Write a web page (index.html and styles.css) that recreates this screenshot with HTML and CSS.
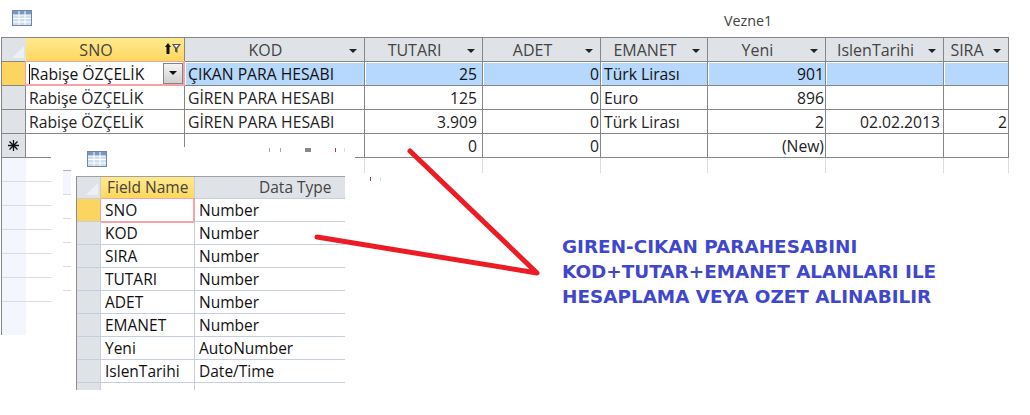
FILE: index.html
```html
<!DOCTYPE html>
<html>
<head>
    <title>Vezne1</title>
    <link rel="stylesheet" href="styles.css">
</head>
<body>
    <!-- Table tab -->
    <div class="tab">
        <svg class="table-icon" viewBox="0 0 20 16"><rect x=".5" y=".5" width="19" height="15" fill="#cfdcee" stroke="#6f86ab"/><rect x="1" y="1" width="18" height="4" fill="#7d97c4"/><path d="M7 1v14M13 1v14M1 5h18M1 8.500h18M1 12h18" stroke="#fff" fill="none"/></svg>
        <span class="tab-title">Vezne1</span>
    </div>

    <!-- Main datasheet -->
    <div class="sheet">
        <div class="corner"><span class="corner-mark"></span></div>
        <div class="head head-active">SNO<svg class="filter-icon" viewBox="0 0 16 11"><path d="M3 0 6 4H4.500v7h-3V4H0z" fill="#111"/><path d="M7 1h9l-3.500 4.500V10L10 8.500v-3z" fill="#555"/><path d="M9 2h4.500l-2.200 2.800z" fill="#fff"/></svg></div>
        <div class="head">KOD<i class="drop"></i></div>
        <div class="head">TUTARI<i class="drop"></i></div>
        <div class="head">ADET<i class="drop"></i></div>
        <div class="head">EMANET<i class="drop"></i></div>
        <div class="head">Yeni<i class="drop"></i></div>
        <div class="head">IslenTarihi<i class="drop"></i></div>
        <div class="head">SIRA<i class="drop"></i></div>

        <div class="sel sel-active"></div>
        <div class="cell cell-edit"><span class="caret"></span>Rabişe ÖZÇELİK<span class="combo"><i class="combo-arrow"></i></span></div>
        <div class="cell hi">ÇIKAN PARA HESABI</div>
        <div class="cell hi num money">25</div>
        <div class="cell hi num">0</div>
        <div class="cell hi">Türk Lirası</div>
        <div class="cell hi num">901</div>
        <div class="cell hi num"></div>
        <div class="cell hi num"></div>

        <div class="sel"></div>
        <div class="cell">Rabişe ÖZÇELİK</div>
        <div class="cell">GİREN PARA HESABI</div>
        <div class="cell num money">125</div>
        <div class="cell num">0</div>
        <div class="cell">Euro</div>
        <div class="cell num">896</div>
        <div class="cell num"></div>
        <div class="cell num"></div>

        <div class="sel"></div>
        <div class="cell">Rabişe ÖZÇELİK</div>
        <div class="cell">GİREN PARA HESABI</div>
        <div class="cell num money">3.909</div>
        <div class="cell num">0</div>
        <div class="cell">Türk Lirası</div>
        <div class="cell num">2</div>
        <div class="cell num date">02.02.2013</div>
        <div class="cell num">2</div>

        <div class="sel sel-new"><svg class="new-icon" viewBox="0 0 11 11"><path d="M5.500 0v11M0 5.500h11M1.500 1.500l8 8M9.500 1.500l-8 8" stroke="#111" stroke-width="1.300" fill="none"/></svg></div>
        <div class="cell"></div>
        <div class="cell"></div>
        <div class="cell num money">0</div>
        <div class="cell num">0</div>
        <div class="cell"></div>
        <div class="cell num">(New)</div>
        <div class="cell num"></div>
        <div class="cell num"></div>

        <div class="tail tail-sel"></div>
        <div class="tail"></div>
        <div class="tail"></div>
        <div class="tail"></div>
        <div class="tail"></div>
        <div class="tail"></div>
        <div class="tail"></div>
        <div class="tail"></div>
        <div class="tail"></div>
    </div>

    <!-- Leftover of the sheet below the pasted picture -->
    <div class="strip">
        <div class="strip-row"></div>
        <div class="strip-row"></div>
        <div class="strip-row"></div>
        <div class="strip-row"></div>
        <div class="strip-row"></div>
        <div class="strip-row"></div>
        <div class="strip-row strip-last"></div>
    </div>

    <!-- Pasted design view -->
    <div class="paste">
        <i class="tick t1"></i><i class="tick t2"></i><i class="tick t3"></i><i class="tick t4"></i><i class="tick t5"></i>
        <div class="ghost">
            <div class="ghost-row"></div>
            <div class="ghost-row ghost-plain"></div>
            <div class="ghost-row ghost-plain"></div>
            <div class="ghost-row ghost-plain"></div>
            <div class="ghost-row ghost-plain"></div>
            <div class="ghost-row ghost-plain"></div>
        </div>
        <svg class="table-icon design-icon" viewBox="0 0 20 16"><rect x=".5" y=".5" width="19" height="15" fill="#cfdcee" stroke="#6f86ab"/><rect x="1" y="1" width="18" height="4" fill="#7d97c4"/><path d="M7 1v14M13 1v14M1 5h18M1 8.500h18M1 12h18" stroke="#fff" fill="none"/></svg>
        <div class="design">
            <div class="corner design-corner"><span class="corner-mark"></span></div>
            <div class="dhead dhead-active">Field Name</div>
            <div class="dhead dhead-type">Data Type</div>

            <div class="dsel sel-active"></div><div class="dcell dname dcell-edit">SNO</div><div class="dcell">Number</div>
            <div class="dsel"></div><div class="dcell dname">KOD</div><div class="dcell">Number</div>
            <div class="dsel"></div><div class="dcell dname">SIRA</div><div class="dcell">Number</div>
            <div class="dsel"></div><div class="dcell dname">TUTARI</div><div class="dcell">Number</div>
            <div class="dsel"></div><div class="dcell dname">ADET</div><div class="dcell">Number</div>
            <div class="dsel"></div><div class="dcell dname">EMANET</div><div class="dcell">Number</div>
            <div class="dsel"></div><div class="dcell dname">Yeni</div><div class="dcell">AutoNumber</div>
            <div class="dsel"></div><div class="dcell dname">IslenTarihi</div><div class="dcell">Date/Time</div>
            <div class="dsel dsel-end"></div><div class="dcell dname dcell-end"></div><div class="dcell dcell-end"></div>
        </div>
    </div>

    <i class="tick t6"></i><i class="tick t7"></i>

    <!-- Arrows drawn on top -->
    <svg class="arrows" viewBox="0 0 1030 415">
        <path d="M410 151 537 273 317 237" fill="none" stroke="#ed1c24" stroke-width="5" stroke-linecap="round" stroke-linejoin="round"/>
    </svg>

    <div class="note">
        GIREN-CIKAN PARAHESABINI<br>
        KOD+TUTAR+EMANET ALANLARI ILE<br>
        HESAPLAMA VEYA OZET ALINABILIR
    </div>
</body>
</html>
```

FILE: styles.css
```css
* {
    margin: 0;
    padding: 0;
    box-sizing: border-box;
}

body {
    width: 1030px;
    height: 415px;
    overflow: hidden;
    position: relative;
    background: #fff;
    font-family: 'Open Sans', sans-serif;
    font-size: 15.700px;
    color: #222;
}

.tab {
    height: 37px;
    padding: 10px 0 0 12px;
    display: flex;
    align-items: flex-start;
}

.table-icon {
    width: 20px;
    height: 16px;
    display: block;
}

.tab-title {
    margin-left: 692px;
    margin-top: 2px;
    font-size: 14.300px;
    line-height: 17px;
    color: #444;
}

/* Main datasheet */
.sheet {
    margin-left: 1px;
    width: 1008px;
    display: grid;
    grid-template-columns: 24px 159px 180px 118px 118px 107px 118px 118px 65px;
    grid-template-rows: repeat(5, 24px) 15px;
    border-left: 1px solid #868686;
    border-top: 1px solid #868686;
}

.corner {
    background: #dfe2e7;
    border-bottom: 1px solid #868686;
    position: relative;
}

.corner-mark {
    position: absolute;
    right: 2px;
    bottom: 3px;
    width: 0;
    height: 0;
    border-left: 12px solid transparent;
    border-bottom: 12px solid #eef0f3;
}

.head {
    background: #dfe2e7;
    border-right: 1px solid #868686;
    border-bottom: 1px solid #868686;
    display: flex;
    align-items: center;
    justify-content: center;
    position: relative;
    padding-right: 18px;
    color: #444;
    font-size: 16px;
}

.head-active {
    background: linear-gradient(#fee98f, #ffd75e);
}

.drop {
    position: absolute;
    right: 7px;
    top: 11px;
    width: 0;
    height: 0;
    border-left: 4px solid transparent;
    border-right: 4px solid transparent;
    border-top: 4px solid #222;
}

.filter-icon {
    position: absolute;
    right: 3px;
    top: 5px;
    width: 16px;
    height: 11px;
}

.sel {
    background: #dfe2e7;
    border-right: 1px solid #868686;
    border-bottom: 1px solid #868686;
}

.sel-active {
    background: #fcd560;
}

.sel-new {
    display: flex;
    align-items: center;
    justify-content: center;
}

.new-icon {
    width: 11px;
    height: 11px;
    display: block;
}

.cell {
    border-right: 1px solid #868686;
    border-bottom: 1px solid #868686;
    padding: 0 1px 0 3px;
    line-height: 24px;
    white-space: nowrap;
    position: relative;
    overflow: hidden;
}

.num {
    text-align: right;
}

.money {
    padding-right: 5px;
}

.date {
    padding-right: 3px;
}

.hi {
    background: #b5d8fc;
    box-shadow: inset 1px 1px 0 #fff;
    color: #111;
}

.cell-edit {
    border: 1px solid #f5a3a8;
    border-width: 1px 2px 2px 1px;
    margin: -1px 0 0 -1px;
    padding-left: 4px;
    line-height: 24px;
    color: #111;
    overflow: visible;
}

.caret {
    position: absolute;
    left: 3px;
    top: 2px;
    width: 1px;
    height: 20px;
    background: #111;
}

.combo {
    position: absolute;
    right: 0;
    top: 1px;
    width: 20px;
    height: 21px;
    border: 1px solid #868686;
    background: linear-gradient(#f4f4f4, #cfcfcf);
}

.combo-arrow {
    position: absolute;
    left: 5px;
    top: 7px;
    width: 0;
    height: 0;
    border-left: 4px solid transparent;
    border-right: 4px solid transparent;
    border-top: 4px solid #111;
}

.tail {
    border-right: 1px solid #dcdcdc;
}

.tail-sel {
    background: #f4f6fd;
    border-right: none;
}

/* Leftover grid on the left of the pasted picture */
.strip {
    position: absolute;
    left: 1px;
    top: 158px;
    width: 50px;
    height: 177px;
    border-left: 1px solid #868686;
    background: linear-gradient(to right, #f4f6fd 24px, #fff 24px);
}

.strip-row {
    height: 24px;
    border-bottom: 1px solid #dcdcdc;
}

.strip-last {
    border-bottom: none;
}

/* Pasted design view */
.paste {
    position: absolute;
    left: 51px;
    top: 147px;
    width: 304px;
    height: 268px;
    background: #fff;
}

.ghost {
    position: absolute;
    left: 12px;
    top: 23px;
    width: 8px;
}

.ghost-row {
    height: 24px;
    background: #f4f6fd;
    border-top: 1px solid #b4b4b4;
}

.ghost-plain {
    background: #fff;
    border-top: 1px solid #dcdcdc;
}

.design-icon {
    position: absolute;
    left: 36px;
    top: 4px;
}

.design {
    position: absolute;
    left: 25px;
    top: 29px;
    width: 269px;
    display: grid;
    grid-template-columns: 24px 94px 150px;
    grid-template-rows: 22px repeat(8, 23px) 7px;
    border-left: 1px solid #8e8e8e;
    border-top: 1px solid #a0a0a0;
    font-size: 15.500px;
}

.design-corner {
    border-right: 1px solid #c5cfe0;
    border-bottom: 1px solid #c5cfe0;
}

.dhead {
    background: #dfe2e7;
    border-bottom: 1px solid #c5cfe0;
    line-height: 21px;
    color: #444;
    padding-left: 6px;
}

.dhead-active {
    background: linear-gradient(#fee98f, #ffd75e);
    border-right: 1px solid #c5cfe0;
}

.dhead-type {
    padding-left: 64px;
}

.dsel {
    background: #dfe2e7;
    border-right: 1px solid #c5cfe0;
    border-bottom: 1px solid #c5cfe0;
}

.dsel.sel-active {
    background: #fcd560;
}

.dcell {
    border-bottom: 1px solid #c5cfe0;
    padding-left: 4px;
    line-height: 22px;
    color: #111;
    white-space: nowrap;
}

.dname {
    border-right: 1px solid #c5cfe0;
}

.dcell-edit {
    border: 1px solid #f5a3a8;
    border-right-width: 2px;
    border-bottom-width: 2px;
    margin: -1px 0 -1px -1px;
    padding-left: 4px;
    line-height: 23px;
}

.dsel-end,
.dcell-end {
    border-bottom: none;
}

/* Small scraps left by the cut-out */
.tick {
    position: absolute;
    width: 1px;
    height: 4px;
    background: #a8a8a8;
}

.t1 { left: 218px; top: 1px; }
.t2 { left: 229px; top: 1px; }
.t3 { left: 254px; top: 1px; width: 6px; background: #888; }
.t4 { left: 284px; top: 1px; background: #a04048; }
.t5 { left: 293px; top: 1px; background: #ddd; }
.t6 { left: 370px; top: 177px; background: #a04048; }
.t7 { left: 380px; top: 177px; background: #ddd; }

.arrows {
    position: absolute;
    left: 0;
    top: 0;
    width: 1030px;
    height: 415px;
}

.note {
    position: absolute;
    left: 562px;
    top: 234px;
    font-family: 'DejaVu Sans', sans-serif;
    font-weight: bold;
    font-size: 18.400px;
    line-height: 25px;
    color: #3f48cc;
    white-space: nowrap;
}
```
